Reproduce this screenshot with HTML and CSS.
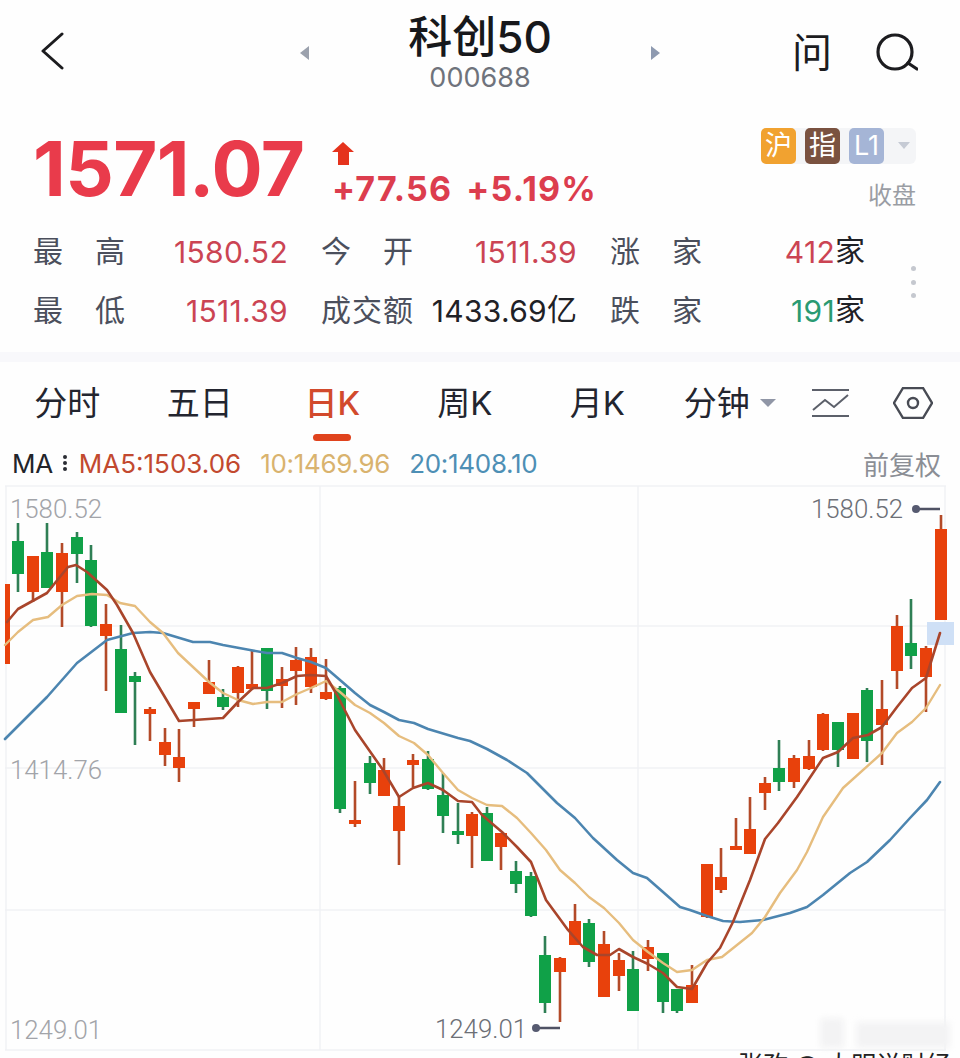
FILE: index.html
```html
<!DOCTYPE html>
<html lang="zh">
<head>
  <meta charset="UTF-8">
  <title>科创50</title>
  <link rel="stylesheet" href="styles.css">
</head>
<body>

  <!-- top bar -->
  <header class="topbar">
    <div class="topbar-left">
      <svg class="back-icon" width="24" height="38" viewBox="0 0 24 38"><path d="M22 2L3 19l19 17"/></svg>
    </div>
    <div class="topbar-center">
      <span class="tri-left"></span>
      <div class="title-block">
        <div class="title">科创50</div>
        <div class="code">000688</div>
      </div>
      <span class="tri-right"></span>
    </div>
    <div class="topbar-right">
      <span class="ask">问</span>
      <svg class="search-icon" width="42" height="40" viewBox="0 0 42 40"><circle cx="19" cy="19" r="17"/><path d="M32 30l9 6"/></svg>
    </div>
  </header>

  <!-- price -->
  <section class="quote">
    <div class="price">1571.07</div>
    <div class="change">
      <svg class="up-arrow" width="22" height="23" viewBox="0 0 22 23"><path d="M11 0l11 10h-5v13H6V10H0z"/></svg>
      <div class="change-text"><span>+77.56</span><span>+5.19%</span></div>
    </div>
    <div class="status">
      <div class="tags">
        <span class="tag tag-hu">沪</span>
        <span class="tag tag-zhi">指</span>
        <span class="tag tag-l1">L1</span>
        <span class="tag-more"></span>
      </div>
      <div class="closed">收盘</div>
    </div>
  </section>

  <!-- stats -->
  <section class="stats">
    <div class="stats-grid">
      <div class="stat"><span class="label"><i>最</i><i>高</i></span><span class="value up">1580.52</span></div>
      <div class="stat"><span class="label"><i>今</i><i>开</i></span><span class="value up">1511.39</span></div>
      <div class="stat"><span class="label"><i>涨</i><i>家</i></span><span class="value"><b class="up">412</b><i class="unit">家</i></span></div>
      <div class="stat"><span class="label"><i>最</i><i>低</i></span><span class="value up">1511.39</span></div>
      <div class="stat"><span class="label"><i>成</i><i>交</i><i>额</i></span><span class="value">1433.69<i class="unit">亿</i></span></div>
      <div class="stat"><span class="label"><i>跌</i><i>家</i></span><span class="value"><b class="down">191</b><i class="unit">家</i></span></div>
    </div>
    <div class="more-dots"><span></span><span></span><span></span></div>
  </section>

  <div class="band"></div>

  <!-- period tabs -->
  <nav class="tabs">
    <div class="tab">分时</div>
    <div class="tab">五日</div>
    <div class="tab active"><span>日K</span><span class="underline"></span></div>
    <div class="tab">周K</div>
    <div class="tab">月K</div>
    <div class="tab">分钟<span class="tab-tri"></span></div>
    <div class="tab-icons">
      <svg class="line-icon" width="38" height="28" viewBox="0 0 38 28"><path d="M0 1h37M0 27h37M1 21l12-10 9 7 14-12"/></svg>
      <svg class="hex-icon" width="40" height="32" viewBox="0 0 40 32"><path d="M1 16L10 1h20l9 15-9 15H10z"/><circle cx="20" cy="16" r="5"/></svg>
    </div>
  </nav>

  <!-- MA legend -->
  <div class="ma-row">
    <span class="ma-name">MA</span>
    <span class="ma-dots"><span></span><span></span><span></span></span>
    <span class="ma5">MA5:1503.06</span>
    <span class="ma10">10:1469.96</span>
    <span class="ma20">20:1408.10</span>
    <span class="adjust">前复权</span>
  </div>

  <!-- k line chart, coordinates are page pixels -->
  <svg class="chart" width="960" height="573" viewBox="0 485 960 573">
    <g class="grid">
      <path d="M5 486H946M5 626H946M5 768H946M5 910H946M5 1050H946M6 486V1050M320 486V1050M638 486V1050M945 486V1050"/>
    </g>
    <rect class="last-mark" x="927" y="622" width="27" height="23"/>
    <rect class="ghost" x="820" y="1018" width="24" height="30" rx="4"/>
    <rect class="ghost" x="856" y="1022" width="94" height="26" rx="3"/>

    <path class="wick-red" d="M33 556V602M62 543V627M106 604V691M150 707V741M165 728V766M179 729V782M194 702V727M209 660V694M238 666V707M252 651V690M282 667V708M296 647V705M311 648V693M326 659V700M355 781V827M384 758V796M399 797V865M413 754V787M472 812V868M501 833V870M560 957V1022M575 904V945M604 931V997M619 953V991M648 940V971M692 965V1003M707 864V918M721 848V893M736 818V850M750 797V854M765 777V810M794 755V788M809 740V770M823 713V751M853 713V759M882 680V765M897 615V689M926 646V712M941 515V620"/>
    <path class="body-red" d="M5 584h5v80h-5zM27 556h12v36h-12zM56 553h12v39h-12zM100 624h12v12h-12zM144 709h12v5h-12zM159 742h12v13h-12zM173 757h12v11h-12zM188 702h12v7h-12zM203 682h12v12h-12zM232 667h12v26h-12zM246 684h12v5h-12zM276 679h12v7h-12zM290 660h12v11h-12zM305 657h12v30h-12zM320 692h12v7h-12zM349 820h12v4h-12zM378 770h12v26h-12zM393 806h12v25h-12zM407 760h12v5h-12zM466 814h12v22h-12zM495 833h12v14h-12zM554 958h12v14h-12zM569 921h12v24h-12zM598 944h12v53h-12zM613 960h12v16h-12zM642 947h12v12h-12zM686 985h12v18h-12zM701 864h12v53h-12zM715 877h12v13h-12zM730 846h12v4h-12zM744 829h12v25h-12zM759 783h12v10h-12zM788 758h12v24h-12zM803 756h12v13h-12zM817 714h12v36h-12zM847 713h12v46h-12zM876 709h12v16h-12zM891 626h12v45h-12zM920 648h12v29h-12zM935 529h12v91h-12z"/>

    <path class="wick-green" d="M18 523V592M47 523V588M77 532V583M91 545V627M121 625V713M135 672V745M223 689V710M267 648V709M340 686V813M370 756V794M428 751V790M443 773V833M458 803V844M487 807V861M516 861V893M531 872V917M545 936V1013M589 919V967M633 951V1011M663 953V1013M677 989V1013M779 740V791M838 722V767M867 688V762M911 599V669"/>
    <path class="body-green" d="M12 541h12v33h-12zM41 552h12v36h-12zM71 537h12v17h-12zM85 560h12v66h-12zM115 649h12v64h-12zM129 676h12v6h-12zM217 697h12v10h-12zM261 648h12v43h-12zM334 688h12v121h-12zM364 763h12v20h-12zM422 759h12v30h-12zM437 795h12v21h-12zM452 831h12v4h-12zM481 813h12v48h-12zM510 871h12v13h-12zM525 876h12v40h-12zM539 955h12v48h-12zM583 923h12v39h-12zM627 969h12v42h-12zM657 953h12v49h-12zM671 989h12v22h-12zM773 768h12v14h-12zM832 722h12v28h-12zM861 690h12v51h-12zM905 643h12v13h-12z"/>

    <polyline class="ma-line line-20" points="5,739 47,697 77,663 107,640 133,633 150,632 163,633 193,642 210,642 223,645 250,650 267,653 282,653 297,658 311,662 326,668 340,680 355,693 370,705 384,712 399,720 414,723 428,729 458,738 470,741 487,749 507,760 527,773 557,803 575,818 593,838 617,860 633,873 647,878 663,892 680,907 690,910 707,916 723,921 740,922 763,920 790,913 807,907 823,895 850,873 867,862 890,840 910,818 927,800 940,782"/>
    <polyline class="ma-line line-10" points="5,645 18,632 33,620 48,617 62,605 77,596 92,594 107,595 120,603 135,606 150,622 163,633 178,653 209,682 223,693 238,700 253,704 267,702 282,702 297,694 311,688 326,681 340,692 355,705 370,713 384,723 399,736 414,743 428,755 443,773 458,790 472,798 487,805 502,806 517,818 531,833 546,850 560,870 575,883 589,897 604,908 619,923 633,940 648,952 663,963 677,972 692,970 707,960 722,957 752,933 765,917 780,893 797,870 807,852 823,817 843,788 882,753 897,733 912,722 926,708 940,685"/>
    <polyline class="ma-line line-5" points="7,622 18,609 47,593 55,583 68,567 76,565 87,572 107,590 117,605 133,633 150,672 179,721 223,718 238,702 253,688 267,688 282,683 297,676 310,675 326,676 337,695 355,730 383,770 399,797 413,788 428,783 443,790 458,801 472,802 482,815 502,832 517,847 531,862 546,900 568,930 583,947 597,955 610,955 619,949 633,957 648,964 663,973 677,987 692,989 707,963 720,948 733,922 750,880 765,839 778,823 797,797 803,788 823,758 838,752 853,738 868,735 882,727 897,707 912,688 926,678 940,633"/>

    <text class="axis-label" x="10" y="518">1580.52</text>
    <text class="axis-label" x="10" y="779">1414.76</text>
    <text class="axis-label" x="10" y="1039">1249.01</text>
    <text class="peak-label" x="811" y="518">1580.52</text>
    <text class="peak-label" x="435" y="1038">1249.01</text>
    <path class="pin-line" d="M916 509H940M536 1028H560"/>
    <circle class="pin" cx="916" cy="509" r="4"/>
    <circle class="pin" cx="536" cy="1028" r="4"/>
    <text class="source" x="738" y="1074">张孜 @ 大明说财经</text>
  </svg>

</body>
</html>
```

FILE: styles.css
```css
* {
  margin: 0;
  padding: 0;
  box-sizing: border-box;
}

body {
  width: 960px;
  height: 1058px;
  overflow: hidden;
  background: #fefefe;
  color: #23252b;
  font-family: Inter, "Noto Sans CJK SC", sans-serif;
}

i, b {
  font-style: normal;
  font-weight: normal;
}

.up {
  color: #cb4453;
}

.down {
  color: #2a9a72;
}

/* top bar */
.topbar {
  height: 105px;
  display: grid;
  grid-template-columns: 1fr 360px 1fr;
  align-items: center;
}

.topbar-left {
  padding-left: 40px;
}

.back-icon path {
  fill: none;
  stroke: #1c1c1f;
  stroke-width: 3;
  stroke-linecap: round;
  stroke-linejoin: round;
}

.topbar-center {
  display: flex;
  justify-content: space-between;
  align-items: center;
}

.tri-left, .tri-right {
  width: 0;
  height: 0;
  border-top: 7px solid transparent;
  border-bottom: 7px solid transparent;
}

.tri-left {
  border-right: 9px solid #9ba1ad;
}

.tri-right {
  border-left: 9px solid #8e9ab0;
}

.title-block {
  text-align: center;
}

.title {
  font-size: 44px;
  line-height: 50px;
  font-weight: 500;
  color: #17181b;
}

.code {
  font-size: 27px;
  line-height: 32px;
  color: #6f737c;
}

.topbar-right {
  display: flex;
  justify-content: flex-end;
  align-items: center;
  gap: 44px;
  padding-right: 42px;
}

.ask {
  font-size: 40px;
  line-height: 44px;
  color: #1c1c1f;
}

.search-icon {
  fill: none;
  stroke: #1c1c1f;
  stroke-width: 3.2;
  stroke-linecap: round;
}

/* price */
.quote {
  height: 118px;
  display: flex;
  padding: 0 44px 0 33px;
}

.price {
  width: 272px;
  font-size: 76px;
  line-height: 126px;
  font-weight: 700;
  letter-spacing: -0.6px;
  white-space: nowrap;
  color: #e93b4b;
}

.change {
  margin-left: 27px;
  padding-top: 37px;
}

.up-arrow {
  display: block;
  fill: #e5331d;
}

.change-text {
  margin-top: 4px;
  display: flex;
  gap: 14px;
  font-size: 34px;
  line-height: 40px;
  font-weight: 700;
  letter-spacing: 1.2px;
  color: #dc3d4e;
}

.status {
  margin-left: auto;
  padding-top: 23px;
}

.tags {
  display: flex;
  gap: 9px;
  background: #f4f5f7;
  border-radius: 6px;
  width: 155px;
}

.tag {
  width: 35px;
  height: 36px;
  border-radius: 5px;
  color: #fff;
  font-size: 27px;
  line-height: 36px;
  text-align: center;
}

.tag-hu {
  background: #f1a230;
}

.tag-zhi {
  background: #7a5240;
}

.tag-l1 {
  background: #a5b5d6;
}

.tag-more {
  margin: 14px 0 0 5px;
  width: 0;
  height: 0;
  border-left: 6px solid transparent;
  border-right: 6px solid transparent;
  border-top: 7px solid #c5cad4;
}

.closed {
  margin-top: 17px;
  font-size: 24px;
  line-height: 30px;
  text-align: right;
  color: #9a9da4;
}

/* stats */
.stats {
  display: flex;
  align-items: center;
  padding-left: 33px;
}

.stats-grid {
  display: grid;
  grid-template-columns: 255px 256px 255px;
  column-gap: 33px;
  grid-auto-rows: 59px;
  width: 831px;
}

.stat {
  display: flex;
  justify-content: space-between;
  align-items: center;
}

.label {
  width: 92px;
  margin-bottom: 8px;
  display: flex;
  justify-content: space-between;
  font-size: 30px;
  color: #4b4f5c;
}

.value {
  margin-bottom: 2px;
  font-size: 30px;
  line-height: 40px;
  letter-spacing: 0.3px;
  color: #1f2126;
}

.value.up {
  color: #cb4453;
}

.unit {
  vertical-align: 2px;
  line-height: 20px;
  letter-spacing: 0;
}

.more-dots {
  margin-left: 47px;
  display: flex;
  flex-direction: column;
  gap: 8.5px;
}

.more-dots span {
  width: 5px;
  height: 5px;
  border-radius: 50%;
  background: #c5c8cf;
}

.band {
  margin-top: 11px;
  height: 10px;
  background: #f8f8fb;
}

/* period tabs */
.tabs {
  display: flex;
  height: 79px;
  padding: 21px 0 0 1px;
}

.tab {
  width: 132.5px;
  display: flex;
  justify-content: center;
  align-items: flex-start;
  font-size: 33px;
  line-height: 40px;
  color: #23252f;
}

.tab.active {
  flex-direction: column;
  align-items: center;
  justify-content: flex-start;
  color: #d24a2c;
  font-weight: 500;
}

.underline {
  width: 38px;
  height: 7px;
  margin-top: 11px;
  border-radius: 4px;
  background: #e0431d;
}

.tab-tri {
  margin: 16px 0 0 10px;
  width: 0;
  height: 0;
  border-left: 8px solid transparent;
  border-right: 8px solid transparent;
  border-top: 8px solid #9096a6;
}

.tab-icons {
  display: flex;
  align-items: center;
  gap: 43px;
  height: 40px;
  margin-left: 16px;
}

.line-icon path {
  fill: none;
  stroke: #5c606a;
  stroke-width: 2;
}

.hex-icon {
  fill: none;
  stroke: #484b54;
  stroke-width: 2.4;
}

/* MA legend */
.ma-row {
  height: 44px;
  display: flex;
  align-items: center;
  padding: 0 19px 0 12px;
  font-size: 26px;
  letter-spacing: -0.3px;
}

.ma-name {
  color: #22242a;
}

.ma-dots {
  margin-left: 10px;
  display: flex;
  flex-direction: column;
  gap: 2px;
}

.ma-dots span {
  width: 4px;
  height: 4px;
  border-radius: 50%;
  background: #2a2c33;
}

.ma5 {
  margin-left: 12px;
  letter-spacing: 0;
  color: #c2492f;
}

.ma10 {
  margin-left: 19px;
  color: #d9b36e;
}

.ma20 {
  margin-left: 19px;
  color: #4d8fb5;
}

.adjust {
  margin-left: auto;
  font-size: 26px;
  letter-spacing: 0;
  color: #8b8e95;
}

/* chart */
.chart {
  display: block;
}

.grid path {
  fill: none;
  stroke: #f1f2f5;
  stroke-width: 1.5;
}

.last-mark {
  fill: #cfe0f6;
}

.ghost {
  fill: #f3f3f4;
  filter: blur(3px);
}

.wick-red {
  fill: none;
  stroke: #b34a28;
  stroke-width: 2.6;
}

.body-red {
  fill: #e8410c;
}

.wick-green {
  fill: none;
  stroke: #2f7f55;
  stroke-width: 2.6;
}

.body-green {
  fill: #10a148;
}

.ma-line {
  fill: none;
  stroke-linejoin: round;
  stroke-linecap: round;
}

.line-5 {
  stroke: #a9452b;
  stroke-width: 2.6;
}

.line-10 {
  stroke: #e6bd7e;
  stroke-width: 2.4;
}

.line-20 {
  stroke: #4c85b0;
  stroke-width: 2.6;
}

.axis-label {
  font-family: Roboto, "Liberation Sans", sans-serif;
  font-weight: 300;
  font-size: 25.8px;
  fill: #a2a4a9;
}

.peak-label {
  font-family: Roboto, "Liberation Sans", sans-serif;
  font-weight: 300;
  font-size: 25.8px;
  fill: #6c6f76;
}

.pin-line {
  fill: none;
  stroke: #4f5264;
  stroke-width: 2.4;
}

.pin {
  fill: #565a70;
}

.source {
  font-size: 25px;
  fill: #222;
}
```
